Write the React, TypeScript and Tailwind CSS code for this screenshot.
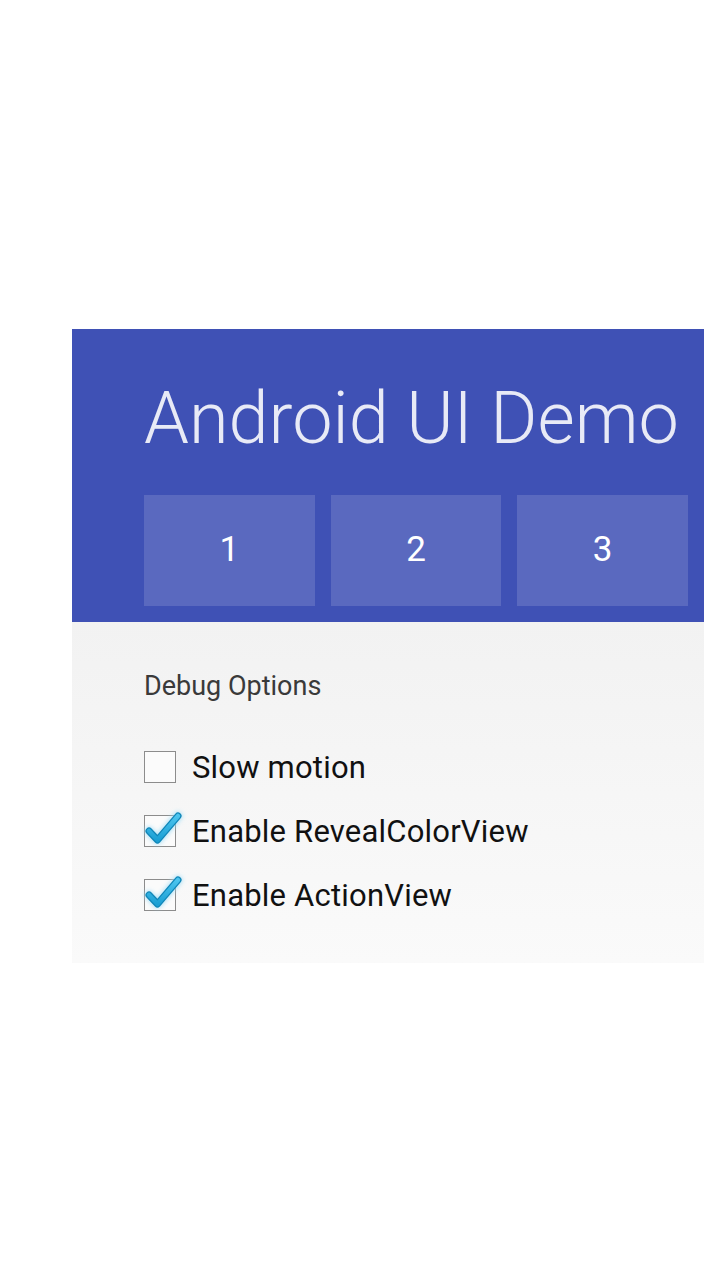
import React from "react";

function Check({ checked }: { checked: boolean }) {
  return (
    <div className="relative w-[32px] h-[32px] shrink-0">
      <div className="absolute inset-0 border-[1.5px] border-[#8c8c8c] bg-[#fbfbfb]" />
      {checked && (
        <svg
          className="absolute left-[-4px] top-[-12px] overflow-visible"
          width="44"
          height="44"
          viewBox="0 0 44 44"
        >
          <defs>
            <filter id="glow" x="-50%" y="-50%" width="200%" height="200%">
              <feGaussianBlur stdDeviation="2.2" />
            </filter>
            <linearGradient id="cg" x1="0" y1="0" x2="0" y2="1">
              <stop offset="0" stopColor="#4cc4ee" />
              <stop offset="1" stopColor="#1a9fd4" />
            </linearGradient>
          </defs>
          <path
            d="M9 28 L17.5 37 L38 13"
            fill="none"
            stroke="#9fdcf5"
            strokeWidth="9"
            strokeLinecap="round"
            strokeLinejoin="round"
            filter="url(#glow)"
            opacity="0.8"
          />
          <path
            d="M9 28 L17.5 37 L38 13"
            fill="none"
            stroke="#0f86b8"
            strokeWidth="7"
            strokeLinecap="round"
            strokeLinejoin="round"
          />
          <path
            d="M9 28 L17.5 37 L38 13"
            fill="none"
            stroke="url(#cg)"
            strokeWidth="4.5"
            strokeLinecap="round"
            strokeLinejoin="round"
          />
        </svg>
      )}
    </div>
  );
}

function Row({ label, checked }: { label: string; checked: boolean }) {
  return (
    <div className="flex items-center h-[32px] gap-[16px]">
      <Check checked={checked} />
      <span className="text-[31px] leading-none text-[#111] tracking-[0.2px] whitespace-nowrap">{label}</span>
    </div>
  );
}

export default function App() {
  return (
    <div
      className="min-h-[1280px] w-[720px] bg-white pt-[329px] pl-[72px] pr-[16px]"
      style={{ fontFamily: "Roboto, 'Liberation Sans', sans-serif" }}
    >
      <div className="bg-[#3f51b5] pl-[72px] pr-[16px] pb-[16px]">
        <div className="h-[166px] pt-[54px]">
          <h1 className="text-[72px] leading-[72px] font-light text-[#e8eaf6] whitespace-nowrap">
            Android UI Demo
          </h1>
        </div>
        <div className="grid grid-cols-3 gap-[16px]">
          {["1", "2", "3"].map((n) => (
            <div
              key={n}
              className="h-[111px] bg-[#5a69bf] flex items-center justify-center text-white text-[35px] font-normal"
            >
              {n}
            </div>
          ))}
        </div>
      </div>
      <div className="h-[341px] bg-gradient-to-b from-[#f2f2f2] to-[#fafafa] pl-[72px] pt-[51px]">
        <div className="text-[27px] leading-none text-[#3a3a3a] h-[78px] whitespace-nowrap">Debug Options</div>
        <div className="flex flex-col gap-[32px]">
          <Row label="Slow motion" checked={false} />
          <Row label="Enable RevealColorView" checked={true} />
          <Row label="Enable ActionView" checked={true} />
        </div>
      </div>
    </div>
  );
}
